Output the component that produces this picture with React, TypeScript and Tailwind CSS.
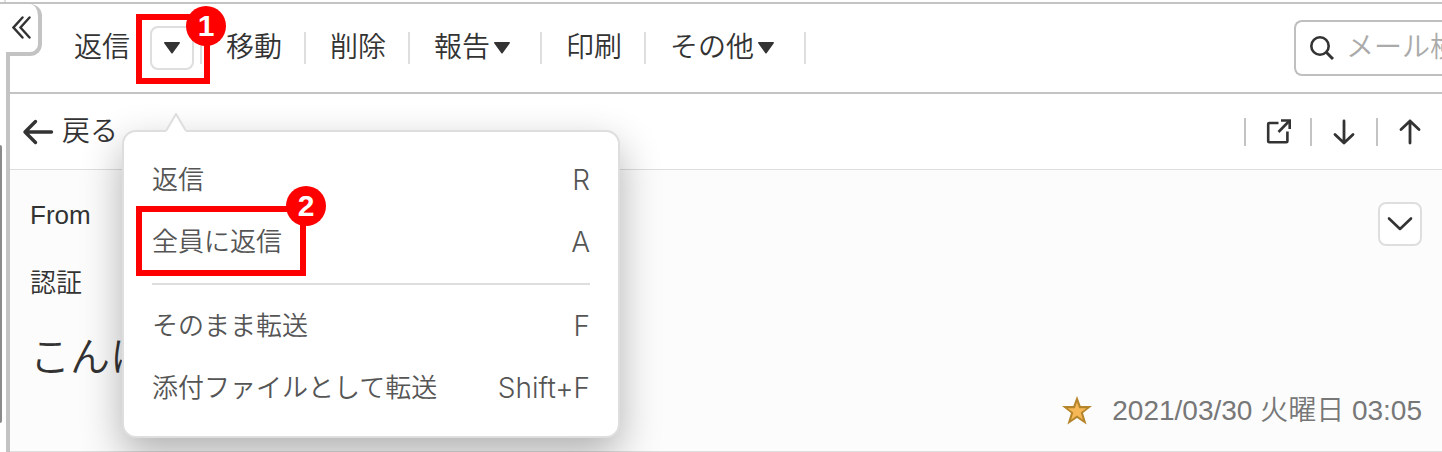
import React from 'react';

interface ToolbarItemProps {
  label: string;
  hasMenu?: boolean;
}

interface MenuItemProps {
  label: string;
  shortcut: string;
  step?: string;
}

interface StepFrameProps {
  step: string;
  className: string;
  badgeClassName: string;
}

const Caret: React.FC = () => (
  <svg viewBox="0 0 16 12" className="w-4 h-3" fill="#333" aria-hidden="true">
    <path d="M.8 0h14.4c.7 0 1 .8.6 1.300L8.600 11.200a.8.8 0 0 1-1.200 0L.2 1.300C-.2.8.1 0 .8 0z" />
  </svg>
);

const Separator: React.FC = () => <span className="w-0.5 h-8 bg-[#dedede]" />;

// Red frame with a numbered badge on its top right corner
const StepFrame: React.FC<StepFrameProps> = ({ step, className, badgeClassName }) => (
  <span className={`absolute h-[70px] border-[6px] border-[#ff0000] pointer-events-none ${className}`}>
    <span
      className={`absolute w-10 h-10 rounded-full bg-[#ff0000] text-white text-[30px] leading-10 text-center font-bold ${badgeClassName}`}
    >
      {step}
    </span>
  </span>
);

const ToolbarItem: React.FC<ToolbarItemProps> = ({ label, hasMenu }) => (
  <>
    <button className={hasMenu ? 'flex items-center gap-1 pl-6 pr-[30px]' : 'pl-6 pr-[22px]'}>
      {label}
      {hasMenu && <Caret />}
    </button>
    <Separator />
  </>
);

const MenuItem: React.FC<MenuItemProps> = ({ label, shortcut, step }) => (
  <li className="relative">
    <button className="flex w-full h-[62px] items-center justify-between">
      <span>{label}</span>
      <kbd className="font-['Inter','Liberation_Sans',sans-serif] font-light text-[28px]">{shortcut}</kbd>
    </button>
    {step && (
      <StepFrame step={step} className="-left-4 -top-[5px] w-[170px]" badgeClassName="-right-[26px] -top-[26px]" />
    )}
  </li>
);

const ReplyMenu: React.FC = () => (
  <div className="absolute -left-7 top-[104px] w-[498px] rounded-[14px] border-2 border-[#dedede] bg-white px-7 py-[17px] text-[26px] text-[#555] shadow-[0_16px_40px_rgba(0,0,0,0.3)]">
    <svg viewBox="0 0 20 19" className="absolute left-[42px] -top-[19px] w-5 h-[19px]" aria-hidden="true">
      <path d="M0 17L10 1l10 16v2H0z" fill="#fff" />
      <path d="M0 18L10 1l10 17" fill="none" stroke="#dedede" strokeWidth="2" />
    </svg>
    <ul>
      <MenuItem label="返信" shortcut="R" />
      <MenuItem label="全員に返信" shortcut="A" step="2" />
    </ul>
    <hr className="my-2.5 border-t-2 border-[#dedede]" />
    <ul>
      <MenuItem label="そのまま転送" shortcut="F" />
      <MenuItem label="添付ファイルとして転送" shortcut="Shift+F" />
    </ul>
  </div>
);

const Toolbar: React.FC = () => (
  <div className="flex items-center h-[90px] pl-16 border-b-2 border-[#c3c3c3] text-[28px] leading-8">
    <button className="mr-5">返信</button>
    <div className="relative z-20 mr-1.5">
      <button
        aria-label="返信メニュー"
        className="flex w-11 h-11 items-center justify-center rounded-lg border-2 border-[#dedede] bg-white"
      >
        <Caret />
      </button>
      <ReplyMenu />
      <StepFrame step="1" className="-left-3.5 -top-3 w-[74px]" badgeClassName="-right-[22px] -top-[14px]" />
    </div>
    <Separator />
    <ToolbarItem label="移動" />
    <ToolbarItem label="削除" />
    <ToolbarItem label="報告" hasMenu />
    <ToolbarItem label="印刷" />
    <ToolbarItem label="その他" hasMenu />

    {/* Search */}
    <label className="ml-auto flex items-center w-[148px] h-14 pl-3.5 rounded-l-lg border-2 border-r-0 border-[#bfbfbf]">
      <svg viewBox="0 0 24 24" className="w-6 h-6 shrink-0" fill="none" stroke="#333" strokeWidth="2.6" aria-hidden="true">
        <circle cx="10" cy="10" r="8.7" />
        <path d="M16.500 16.500l6.500 6.500" strokeWidth="3" />
      </svg>
      <input
        type="text"
        aria-label="メール検索"
        placeholder="メール検索"
        className="ml-3 min-w-0 w-full outline-none placeholder:text-[#aaa]"
      />
    </label>
  </div>
);

const MessageNav: React.FC = () => (
  <div className="flex items-center h-[76px] pl-3 border-b border-[#dedede] text-[28px] leading-8">
    <a href="#" className="flex items-center gap-2">
      <svg viewBox="0 0 32 26" className="w-8 h-[26px]" fill="none" stroke="#333" strokeWidth="3.4" strokeLinecap="round" strokeLinejoin="round" aria-hidden="true">
        <path d="M29.500 13H3M13.500 2.500L3 13l10.500 10.500" />
      </svg>
      戻る
    </a>
    <div className="ml-auto flex items-center">
      <span className="w-0.5 h-7 bg-[#c3c3c3]" />
      <button aria-label="新しいウィンドウで開く" className="flex w-16 justify-center">
        <svg viewBox="0 0 26 26" className="w-[26px] h-[26px]" fill="none" stroke="#333" strokeWidth="2.6" aria-hidden="true">
          <path d="M13.500 4H4.200a1 1 0 0 0-1 1v17.200a1 1 0 0 0 1 1h17.200a1 1 0 0 0 1-1V12.500" />
          <path d="M16 1.500h8.700v8.500" />
          <path d="M24.200 2L13.500 13" />
        </svg>
      </button>
      <span className="w-0.5 h-7 bg-[#c3c3c3]" />
      <button aria-label="次のメール" className="flex w-16 justify-center">
        <svg viewBox="0 0 24 26" className="w-6 h-[26px]" fill="none" stroke="#333" strokeWidth="2.8" strokeLinecap="round" strokeLinejoin="round" aria-hidden="true">
          <path d="M12 2v22M3 15.500l9 8.500 9-8.500" />
        </svg>
      </button>
      <span className="w-0.5 h-7 bg-[#c3c3c3]" />
      <button aria-label="前のメール" className="flex w-16 justify-center">
        <svg viewBox="0 0 24 26" className="w-6 h-[26px]" fill="none" stroke="#333" strokeWidth="2.8" strokeLinecap="round" strokeLinejoin="round" aria-hidden="true">
          <path d="M12 24V2M3 10.500L12 2l9 8.500" />
        </svg>
      </button>
    </div>
  </div>
);

const MessageHeader: React.FC = () => (
  <div className="flex justify-between px-5 pb-5 bg-[#fcfcfc] border-b border-[#dedede]">
    <div className="pt-[25px] pb-11">
      <p className="text-[26px] leading-10">From</p>
      <p className="mt-7 text-[26px] leading-10">認証</p>
      <h1 className="mt-6 text-[40px] leading-[60px]">こんに</h1>
    </div>
    <div className="flex flex-col items-end justify-between pt-8">
      <button aria-label="詳細を表示" className="flex w-11 h-11 items-center justify-center rounded-lg border-2 border-[#dedede] bg-white">
        <svg viewBox="0 0 26 16" className="w-[26px] h-4" fill="none" stroke="#333" strokeWidth="2.6" strokeLinecap="round" strokeLinejoin="round" aria-hidden="true">
          <path d="M2 2.500l11 10.500L24 2.500" />
        </svg>
      </button>
      <div className="flex items-center gap-5 text-[28px] leading-10 text-[#777]">
        <svg viewBox="0 0 30 30" className="w-[30px] h-[30px]" aria-hidden="true">
          <path d="M15 0l3.700 10.100H30l-9 6.900 3.600 11.500L15 22l-9.600 6.500L9 17 0 10.100h11.300z" fill="#b5852b" />
          <path d="M15 6l2.200 6.300h7.200l-5.700 4.200 2.200 7.200-5.900-4.100-5.900 4.100 2.200-7.200-5.700-4.200h7.200z" fill="#f6b756" />
        </svg>
        <time dateTime="2021-03-30T03:05">2021/03/30 火曜日 03:05</time>
      </div>
    </div>
  </div>
);

const App: React.FC = () => (
  <div className="overflow-hidden bg-white font-['Liberation_Sans','Noto_Sans_CJK_JP',sans-serif] font-[350] text-[#333]">
    <div className="ml-1 w-0.5 h-0.5 bg-[#dedede]" />
    <div className="flex border-t-2 border-[#c3c3c3]">
      {/* Sidebar edge */}
      <div className="w-1.5 shrink-0 pt-[141px]">
        <div className="w-0.5 h-[278px] rounded-r-sm bg-[#8a8a8a]" />
      </div>

      <main className="relative flex-1 min-w-0 border-l-4 border-[#c3c3c3]">
        <button
          aria-label="サイドバーを閉じる"
          className="absolute -left-1 top-0 flex w-9 h-[52px] items-center justify-center bg-white rounded-r-xl border-r-4 border-b-4 border-[#c3c3c3]"
        >
          <svg viewBox="0 0 20 24" className="w-5 h-6" fill="none" stroke="#333" strokeWidth="2.4" strokeLinecap="round" aria-hidden="true">
            <path d="M10.500 1.500L1.500 11.500l9 10M17.500 1.500L8.500 11.500l9 10" />
          </svg>
        </button>
        <Toolbar />
        <MessageNav />
        <MessageHeader />
      </main>
    </div>
  </div>
);

export default App;
